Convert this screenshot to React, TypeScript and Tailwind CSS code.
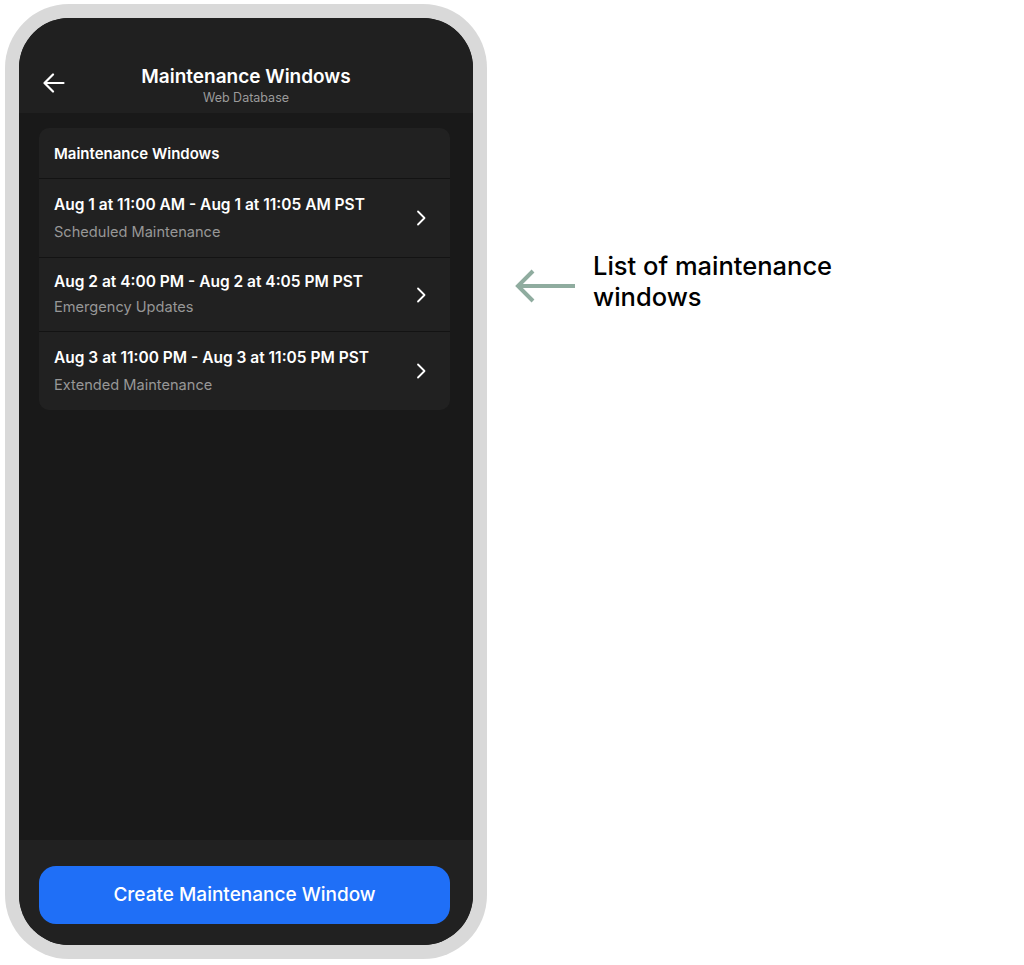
import React from 'react';

const windows = [
  { range: 'Aug 1 at 11:00 AM - Aug 1 at 11:05 AM PST', label: 'Scheduled Maintenance', h: 'h-[79px]', gap: 'gap-[7px]' },
  { range: 'Aug 2 at 4:00 PM - Aug 2 at 4:05 PM PST', label: 'Emergency Updates', h: 'h-[74px]', gap: 'gap-[5px]' },
  { range: 'Aug 3 at 11:00 PM - Aug 3 at 11:05 PM PST', label: 'Extended Maintenance', h: 'h-[78px]', gap: 'gap-[7px]' },
];

function BackArrow() {
  return (
    <svg width="22" height="20" viewBox="0 0 22 20" fill="none" stroke="white" strokeWidth="2.2" strokeLinecap="round" strokeLinejoin="round">
      <path d="M20.5 10H2M10 1.5L1.5 10l8.5 8.5" />
    </svg>
  );
}

function Chevron() {
  return (
    <svg width="10" height="16" viewBox="0 0 10 16" fill="none" stroke="white" strokeWidth="1.8" strokeLinecap="round" strokeLinejoin="round">
      <path d="M2 1.5L8.5 8 2 14.5" />
    </svg>
  );
}

export default function App() {
  return (
    <div className="flex h-[965px] w-[1024px] bg-white" style={{ fontFamily: 'Inter, "Noto Sans", sans-serif' }}>
      <div className="ml-[5px] mt-[4px] h-[955px] w-[482px] shrink-0 rounded-[64px] bg-[#d9d9d9] p-[14px]">
        <div className="flex h-full flex-col overflow-hidden rounded-[50px] bg-[#191919]">
          {/* header */}
          <div className="relative flex h-[95px] shrink-0 flex-col items-center bg-[#202020] pt-[46px]">
            <div className="absolute left-[24px] top-[55px]">
              <BackArrow />
            </div>
            <div className="text-[19px] font-semibold leading-[26px] text-white">Maintenance Windows</div>
            <div className="text-[12.5px] leading-[16px] text-[#9b9b9b]">Web Database</div>
          </div>

          {/* list */}
          <div className="flex-1 pl-[20px] pr-[23px] pt-[15px]">
            <div className="overflow-hidden rounded-[10px] bg-[#212121]">
              <div className="flex h-[51px] items-center border-b border-[#131313] px-[15px] pt-[2px] text-[15px] font-semibold text-white">
                Maintenance Windows
              </div>
              {windows.map((w, i) => (
                <div
                  key={w.range}
                  className={`flex items-center justify-between px-[15px] ${w.h} ${i < windows.length - 1 ? 'border-b border-[#131313]' : ''}`}
                >
                  <div className={`flex flex-col ${w.gap}`}>
                    <div className="text-[15.5px] font-semibold leading-[20px] text-white">{w.range}</div>
                    <div className="text-[14.6px] leading-[20px] text-[#979797]">{w.label}</div>
                  </div>
                  <div className="mr-[9px]">
                    <Chevron />
                  </div>
                </div>
              ))}
            </div>
          </div>

          {/* footer */}
          <div className="h-[105px] shrink-0 bg-[#212121] pl-[20px] pr-[23px] pt-[26px]">
            <button className="flex h-[58px] w-full items-center justify-center rounded-[17px] bg-[#1f6ff7] text-[19px] font-medium text-white">
              Create Maintenance Window
            </button>
          </div>
        </div>
      </div>

      {/* annotation */}
      <div className="ml-[27px] mt-[250px] flex items-start gap-[17px]">
        <svg width="62" height="36" viewBox="0 0 62 36" fill="none" stroke="#8fac9f" strokeWidth="4" strokeLinecap="butt" strokeLinejoin="miter" className="mt-[18px]">
          <path d="M61 18H4M19 3L4 18l15 15" />
        </svg>
        <div className="text-[25.5px] font-medium leading-[31px] text-black">
          List of maintenance
          <br />
          windows
        </div>
      </div>
    </div>
  );
}
